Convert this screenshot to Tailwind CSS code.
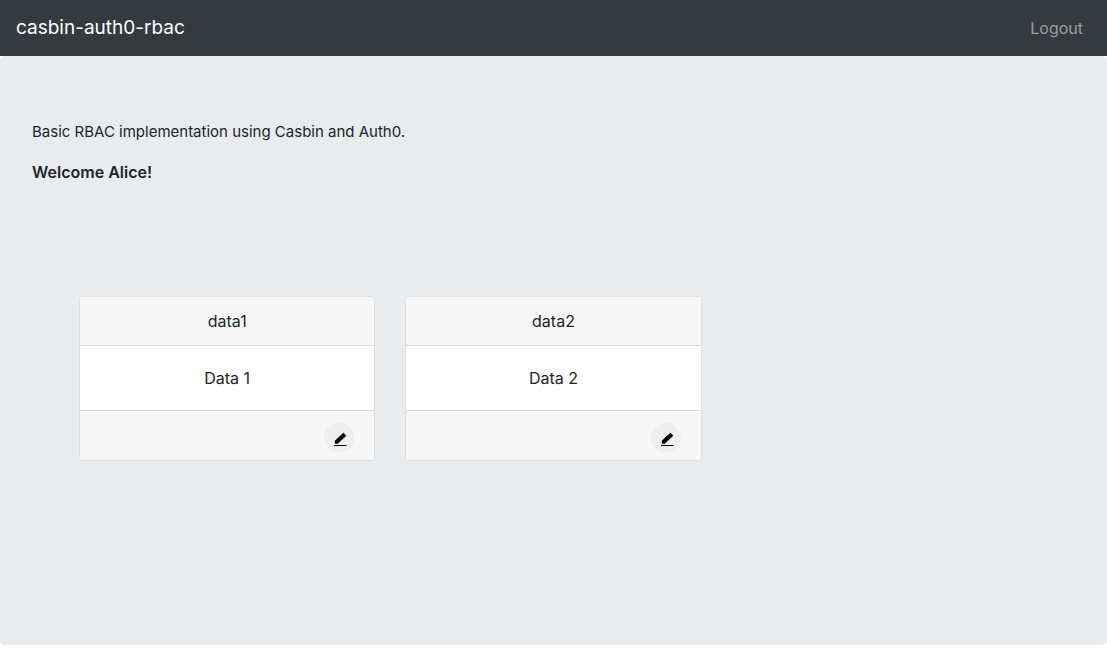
<!DOCTYPE html>
<html lang="en">
<head>
<meta charset="utf-8">
<meta name="viewport" content="width=device-width, initial-scale=1">
<title>casbin-auth0-rbac</title>
<script src="https://cdn.jsdelivr.net/npm/@tailwindcss/browser@4"></script>
</head>
<body class="bg-white font-['Inter',sans-serif] text-base text-[#212529]">
<header class="flex h-14 items-center justify-between bg-[#343a40] px-4">
  <a href="#" class="text-[19px] text-white">casbin-auth0-rbac</a>
  <nav><a href="#" class="px-2 text-white/50">Logout</a></nav>
</header>
<main class="min-h-[589px] rounded-[5px] bg-[#e9ecef] px-8 py-16">
  <p class="mb-4 text-[15px] leading-6">Basic RBAC implementation using Casbin and Auth0.</p>
  <p class="font-semibold">Welcome Alice!</p>
  <div class="mx-[47px] mt-28 grid grid-cols-3 gap-[30px]">
    <section class="rounded border border-[#dfdfdf] bg-white text-center">
      <h2 class="rounded-t-[3px] border-b border-[#d8d8d8] bg-[#f7f7f7] py-3">data1</h2>
      <p class="p-5">Data 1</p>
      <footer class="flex justify-end rounded-b-[3px] border-t border-[#d8d8d8] bg-[#f7f7f7] px-5 pt-3 pb-[7px]">
        <button type="button" aria-label="Edit data1" class="flex size-[30px] items-center justify-center rounded-full bg-[#efefef]">
          <svg class="size-4" viewBox="0 0 16 16" aria-hidden="true"><path d="M3.8 10.8V13.8H6.8L12.8 8.1L9.8 5.1ZM10 4.9L13 7.9L15.3 5.6L12.4 2.8Z"/><path d="M3 15h12.5v1.4H3z"/></svg>
        </button>
      </footer>
    </section>
    <section class="rounded border border-[#dfdfdf] bg-white text-center">
      <h2 class="rounded-t-[3px] border-b border-[#d8d8d8] bg-[#f7f7f7] py-3">data2</h2>
      <p class="p-5">Data 2</p>
      <footer class="flex justify-end rounded-b-[3px] border-t border-[#d8d8d8] bg-[#f7f7f7] px-5 pt-3 pb-[7px]">
        <button type="button" aria-label="Edit data2" class="flex size-[30px] items-center justify-center rounded-full bg-[#efefef]">
          <svg class="size-4" viewBox="0 0 16 16" aria-hidden="true"><path d="M3.8 10.8V13.8H6.8L12.8 8.1L9.8 5.1ZM10 4.9L13 7.9L15.3 5.6L12.4 2.8Z"/><path d="M3 15h12.5v1.4H3z"/></svg>
        </button>
      </footer>
    </section>
  </div>
</main>
</body>
</html>
